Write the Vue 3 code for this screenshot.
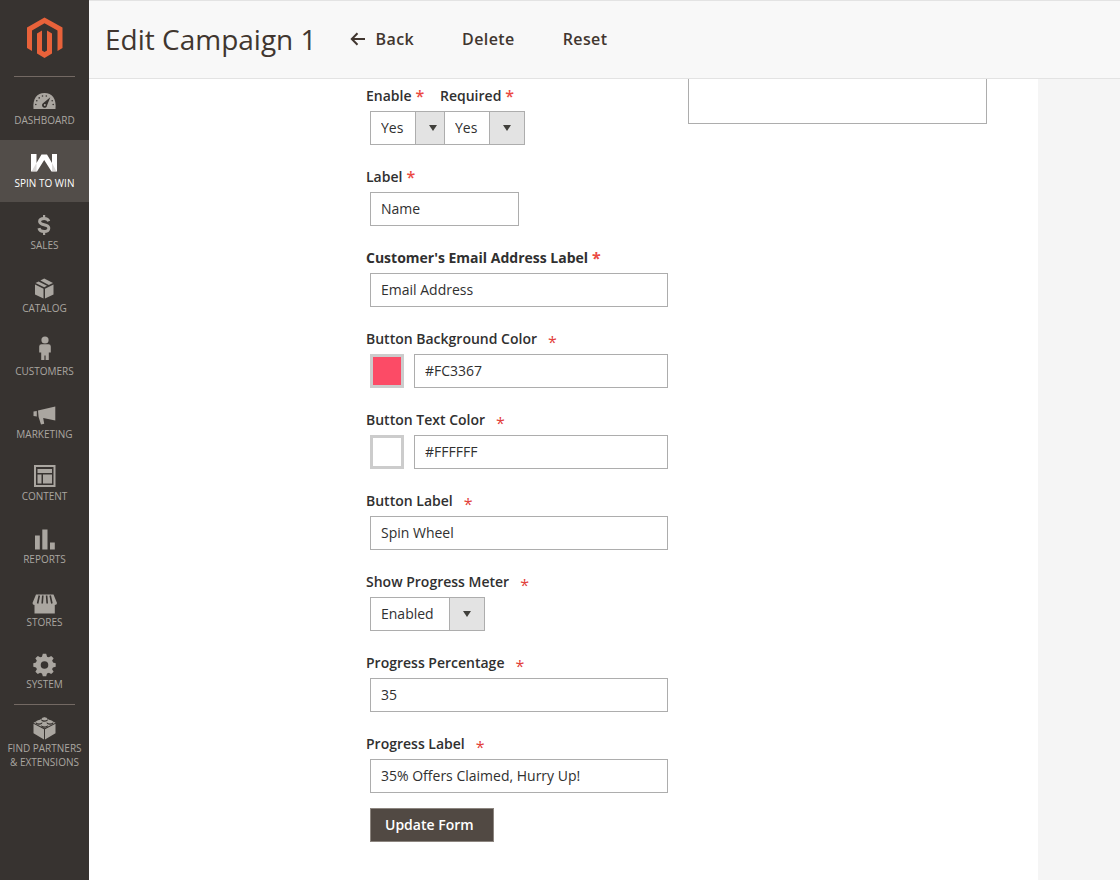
<script setup>
import { reactive } from 'vue'

const navItems = [
  { id: 'dashboard', label: 'Dashboard' },
  { id: 'spin', label: 'Spin to Win', active: true },
  { id: 'sales', label: 'Sales' },
  { id: 'catalog', label: 'Catalog' },
  { id: 'customers', label: 'Customers' },
  { id: 'marketing', label: 'Marketing' },
  { id: 'content', label: 'Content' },
  { id: 'reports', label: 'Reports' },
  { id: 'stores', label: 'Stores' },
  { id: 'system', label: 'System' }
]

const form = reactive({
  enable: 'Yes',
  required: 'Yes',
  label: 'Name',
  emailLabel: 'Email Address',
  buttonBg: '#FC3367',
  buttonBgSwatch: '#fc4b66',
  buttonText: '#FFFFFF',
  buttonTextSwatch: '#ffffff',
  buttonLabel: 'Spin Wheel',
  meter: 'Enabled',
  percentage: '35',
  progressLabel: '35% Offers Claimed, Hurry Up!',
  css: ''
})
</script>

<template>
  <div class="page">
    <aside class="sidebar">
      <a class="logo" href="#" aria-label="Admin home">
        <svg width="37" height="42" viewBox="0 0 37 42" fill="#e8623a">
          <path d="M18.500 0.500 36.500 10.500V31L31.500 34V13.500L18.500 6.200 6 13.500V34L1 31V10.500Z" />
          <path d="M11 16.500 16 13.500V33.500L18.500 35 21 33.500V13.500L26 16.500V36.500L18.500 41 11 36.500Z" />
        </svg>
      </a>
      <nav class="menu" aria-label="Main">
        <ul class="menu-list">
          <li v-for="item in navItems" :key="item.id">
            <a href="#" class="menu-link" :class="{ active: item.active }">
              <svg class="menu-icon" viewBox="0 0 29 28" fill="currentColor" aria-hidden="true">
                <g v-if="item.id === 'dashboard'">
                  <path d="M3.500 24C2.500 13.500 7 8 14.500 8S26.500 13.500 25.500 24Z" />
                  <g fill="#373330">
                    <path fill-rule="evenodd" d="M20.300 12.300 17 20.500A2.500 2.500 0 1 1 12.700 18.600ZM14.800 18.900A1 1 0 1 0 14.900 20.900 1 1 0 0 0 14.800 18.900Z" />
                    <circle cx="5.800" cy="19.500" r="0.800" /><circle cx="6.800" cy="15.800" r="0.800" />
                    <circle cx="9.200" cy="12.900" r="0.800" /><circle cx="12.500" cy="11" r="0.800" />
                    <circle cx="16.300" cy="11" r="0.800" /><circle cx="22.200" cy="15.800" r="0.800" />
                    <circle cx="23.200" cy="19.500" r="0.800" />
                  </g>
                </g>
                <g v-else-if="item.id === 'spin'">
                  <path d="M1 6H6.500V15L11.500 6.500H17L22 15V6H27V23.500H21.500L14.200 12 7 23.500H1Z" />
                  <path d="M6.500 15V24L1.500 23.500ZM22 15V24L26.500 23.500Z" fill="#b9b6b3" opacity="0.500" />
                </g>
                <g v-else-if="item.id === 'sales'">
                  <path d="M18.800 11.300C18.200 9.300 16.600 8.400 14.100 8.400 11.500 8.400 9.600 9.500 9.600 11.500 9.600 16 18.800 13.300 18.800 18.100 18.800 20.400 16.800 21.600 14.100 21.600 11.300 21.600 9.500 20.500 8.900 18.200" fill="none" stroke="currentColor" stroke-width="3" />
                  <path d="M13 5H15.200V9H13ZM13 21H15.200V25H13Z" />
                </g>
                <g v-else-if="item.id === 'catalog'">
                  <path d="M5 11.500 13.500 15.800V25.500L5 21.500Z" />
                  <path d="M15 15.800 23.500 11.500V21.500L15 25.500Z" />
                  <path d="M5.500 10 8.600 8.400 17 12.800 14.200 14.300Z" />
                  <path d="M10.400 7.500 14.200 5.500 23 10 18.800 11.900Z" />
                </g>
                <g v-else-if="item.id === 'customers'">
                  <circle cx="15" cy="4" r="3.600" />
                  <path d="M11.500 8.300H18.500Q20.800 8.300 20.800 10.500V16.500H18.800V24H15.600V19.500H14.400V24H11.200V16.500H9.200V10.500Q9.200 8.300 11.500 8.300Z" />
                </g>
                <g v-else-if="item.id === 'marketing'">
                  <path d="M3.500 12.500 6.800 12V17.500L3.500 17Z M8 11.600 25.300 7.500V21.500L13.200 18.900 14.200 24.800 11 25.500 8.600 18Z" />
                </g>
                <g v-else-if="item.id === 'content'">
                  <path fill-rule="evenodd" d="M4 4H25.500V26H4Z M6 6V24H23.500V6Z" />
                  <path d="M7.500 8H22V12H7.500Z M7.500 13.500H11.500V22.500H7.500Z M13 13.500H22V22.500H13Z" />
                </g>
                <g v-else-if="item.id === 'reports'">
                  <path d="M5 11.500H9.800V25.500H5Z M12.300 5.500H17.500V25.500H12.300Z M20 18.500H24.800V25.500H20Z" />
                </g>
                <g v-else-if="item.id === 'stores'">
                  <path d="M6 7.500H23.500L27 16Q27 18 24.800 18V26.500H4.500V18Q2.500 18 2.500 16Z" />
                  <path d="M9.300 8.500 7.600 16.500M12.800 8.500 12.200 16.500M16.600 8.500 17.200 16.500M20.200 8.500 21.900 16.500" fill="none" stroke="#373330" stroke-width="1.600" />
                </g>
                <g v-else>
                  <circle cx="14.500" cy="16" r="6.300" fill="none" stroke="currentColor" stroke-width="5" />
                  <g>
                    <path v-for="n in 8" :key="n" :transform="`rotate(${n * 45} 14.500 16)`" d="M11.800 8.500 12.800 4.800H16.200L17.200 8.500Z" />
                  </g>
                </g>
              </svg>
              <span>{{ item.label }}</span>
            </a>
          </li>
        </ul>
        <a href="#" class="menu-link partners">
          <svg class="menu-icon" viewBox="0 0 29 28" fill="currentColor" aria-hidden="true">
            <path d="M3.500 10.800 14 16.200V26.500L3.500 20.300Z M15 16.200 25.500 10.800V20.300L15 26.500Z" />
            <path d="M3.500 9.800 14.500 4.500 25.500 9.800 14.500 15.300Z" />
            <path d="M11.700 6.500A2.800 1.500 0 0 0 17.300 6.500M6.200 9.500A2.800 1.500 0 0 0 11.800 9.500M17.200 9.500A2.800 1.500 0 0 0 22.800 9.500M11.700 12.500A2.800 1.500 0 0 0 17.300 12.500" fill="none" stroke="#373330" stroke-width="1.300" />
            <ellipse cx="14.500" cy="5.700" rx="2.800" ry="1.500" /><ellipse cx="9" cy="8.700" rx="2.800" ry="1.500" />
            <ellipse cx="20" cy="8.700" rx="2.800" ry="1.500" /><ellipse cx="14.500" cy="11.700" rx="2.800" ry="1.500" />
          </svg>
          <span>Find Partners<br />&amp; Extensions</span>
        </a>
      </nav>
    </aside>

    <div class="main">
      <header class="toolbar">
        <h1>Edit Campaign 1</h1>
        <div class="actions">
          <button type="button" class="action">
            <svg width="16" height="14" viewBox="0 0 16 14" fill="none" stroke="currentColor" stroke-width="2" aria-hidden="true">
              <path d="M15 7H2M7.500 1.300 1.800 7 7.500 12.700" />
            </svg>
            Back
          </button>
          <button type="button" class="action">Delete</button>
          <button type="button" class="action">Reset</button>
        </div>
      </header>

      <main class="panel">
        <form class="form" @submit.prevent>
          <div class="pair">
            <div class="field">
              <label for="enable">Enable<span class="star">*</span></label>
              <div class="select short">
                <select id="enable" v-model="form.enable"><option>Yes</option><option>No</option></select>
                <span class="caret"></span>
              </div>
            </div>
            <div class="field">
              <label for="required">Required<span class="star">*</span></label>
              <div class="select short">
                <select id="required" v-model="form.required"><option>Yes</option><option>No</option></select>
                <span class="caret"></span>
              </div>
            </div>
          </div>
          <div class="field">
            <label for="label">Label<span class="star">*</span></label>
            <input id="label" v-model="form.label" class="text half" type="text" />
          </div>
          <div class="field">
            <label for="email" class="strong">Customer's Email Address Label<span class="star">*</span></label>
            <input id="email" v-model="form.emailLabel" class="text" type="text" />
          </div>
          <div class="field">
            <label for="bg">Button Background Color<span class="star low">*</span></label>
            <div class="color-row">
              <input v-model="form.buttonBgSwatch" class="swatch" type="color" aria-label="Pick button background color" />
              <input id="bg" v-model="form.buttonBg" class="text" type="text" />
            </div>
          </div>
          <div class="field">
            <label for="fg">Button Text Color<span class="star low">*</span></label>
            <div class="color-row">
              <input v-model="form.buttonTextSwatch" class="swatch" type="color" aria-label="Pick button text color" />
              <input id="fg" v-model="form.buttonText" class="text" type="text" />
            </div>
          </div>
          <div class="field">
            <label for="btn-label">Button Label<span class="star low">*</span></label>
            <input id="btn-label" v-model="form.buttonLabel" class="text" type="text" />
          </div>
          <div class="field">
            <label for="meter">Show Progress Meter<span class="star low">*</span></label>
            <div class="select wide">
              <select id="meter" v-model="form.meter"><option>Enabled</option><option>Disabled</option></select>
              <span class="caret"></span>
            </div>
          </div>
          <div class="field">
            <label for="percent">Progress Percentage<span class="star low">*</span></label>
            <input id="percent" v-model="form.percentage" class="text" type="text" />
          </div>
          <div class="field">
            <label for="progress">Progress Label<span class="star low">*</span></label>
            <input id="progress" v-model="form.progressLabel" class="text" type="text" />
          </div>
          <button type="submit" class="update">Update Form</button>
        </form>
        <textarea v-model="form.css" class="notes" aria-label="Custom text"></textarea>
      </main>
    </div>
  </div>
</template>

<style>
body {
  background: #f5f5f5;
}
</style>

<style scoped>
.page,
.page * {
  box-sizing: border-box;
}
.page {
  display: flex;
  min-height: 100vh;
  font-family: "Open Sans", "Noto Sans", sans-serif;
  font-size: 14px;
  line-height: 20px;
  color: #303030;
}
button,
input,
select,
textarea {
  font: inherit;
  color: inherit;
  border-radius: 0;
  margin: 0;
}
.sidebar {
  flex: 0 0 89px;
  background: #373330;
}
.logo {
  display: flex;
  justify-content: center;
  align-items: center;
  height: 76px;
}
.menu-list {
  display: grid;
  grid-auto-rows: 1fr;
  min-height: 627px;
  margin: 0;
  padding: 0;
  list-style: none;
}
.menu::before,
.partners::before {
  content: "";
  display: block;
  width: 61px;
  height: 1px;
  margin: 0 auto;
  background: #736963;
}
.menu-link {
  display: flex;
  flex-direction: column;
  align-items: center;
  height: 100%;
  padding-top: 8px;
  color: #aaa6a0;
  font-size: 10px;
  line-height: 14px;
  text-align: center;
  text-transform: uppercase;
  text-decoration: none;
}
.menu-link.active {
  background: #524d49;
  color: #fff;
}
.menu-link.partners {
  padding-top: 0;
}
.partners::before {
  margin-bottom: 8px;
}
.menu-icon {
  width: 29px;
  height: 28px;
}
.main {
  flex: 1;
  min-width: 0;
  display: flex;
  flex-direction: column;
}
.toolbar {
  display: flex;
  align-items: center;
  height: 79px;
  padding: 0 16px 2px;
  border-top: 1px solid #e3e3e3;
  border-bottom: 1px solid #e3e3e3;
  background: #f8f8f8;
}
h1 {
  margin: 0;
  font-size: 28px;
  line-height: 36px;
  font-weight: 400;
  color: #41362f;
}
.actions {
  display: flex;
  gap: 48px;
  margin-left: 33px;
}
.action {
  display: flex;
  align-items: center;
  gap: 10px;
  padding: 0;
  border: 0;
  background: none;
  color: #41362f;
  font-size: 16px;
  line-height: 24px;
  font-weight: 600;
  letter-spacing: 0.025em;
}
.panel {
  flex: 1;
  display: flex;
  align-items: flex-start;
  gap: 20px;
  margin-right: 82px;
  padding-left: 277px;
  background: #fff;
}
.form {
  display: flex;
  flex-direction: column;
  gap: 22px;
  width: 302px;
  padding-top: 7px;
}
.pair {
  display: grid;
  grid-template-columns: 74px 1fr;
}
.field {
  display: flex;
  flex-direction: column;
  gap: 5px;
}
label {
  display: flex;
  height: 20px;
  font-weight: 600;
}
.strong {
  font-weight: 700;
}
.star {
  margin-left: 4px;
  color: #eb4a43;
  font-size: 16px;
}
.star.low {
  margin-left: 11px;
  padding-top: 3px;
  color: #e2403a;
  font-weight: 400;
}
.text,
.select,
.color-row {
  margin-left: 4px;
}
.text {
  height: 34px;
  padding: 0 10px 1px;
  border: 1px solid #adadad;
  background: #fff;
}
.half {
  width: 149px;
}
.color-row {
  display: flex;
  gap: 10px;
}
.color-row .text {
  flex: 1;
  min-width: 0;
  margin-left: 0;
}
.swatch {
  appearance: none;
  width: 34px;
  height: 34px;
  padding: 0;
  border: 3px solid #ccc;
  background: #fff;
}
.swatch::-webkit-color-swatch-wrapper {
  padding: 0;
}
.swatch::-webkit-color-swatch {
  border: 0;
  border-radius: 0;
}
.select {
  display: grid;
  height: 34px;
}
.select > * {
  grid-area: 1 / 1;
}
.short {
  width: 81px;
}
.wide {
  width: 115px;
}
.select select {
  appearance: none;
  padding: 0 46px 0 10px;
  border: 1px solid #adadad;
  background: #fff;
}
.caret {
  display: flex;
  align-items: center;
  justify-content: center;
  justify-self: end;
  width: 36px;
  border: 1px solid #adadad;
  background: #e3e3e3;
  pointer-events: none;
}
.caret::before {
  content: "";
  border: solid transparent;
  border-width: 6px 4px 0;
  border-top-color: #41403c;
}
.update {
  align-self: flex-start;
  height: 34px;
  margin: -7px 0 38px 4px;
  padding: 0 19px 0 14px;
  border: 1px solid #8c857f;
  background: #514943;
  color: #fff;
  font-weight: 600;
}
.notes {
  width: 299px;
  height: 45px;
  border: 1px solid #adadad;
  border-top: 0;
  background: #fff;
  resize: none;
}
</style>
